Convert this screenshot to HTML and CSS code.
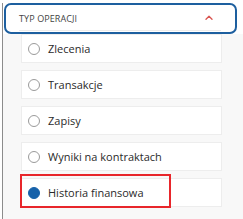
FILE: index.html
```html
<!DOCTYPE html>
<html>
<head>
    <meta name="viewport" content="width=device-width, initial-scale=1">
    <title>Typ operacji</title>
    <link rel="stylesheet" href="styles.css">
</head>
<body>
    <div class="panel">
        <div class="section-head">
            <div class="head-row">
                <span class="head-title">Typ operacji</span>
                <svg class="chevron" width="8" height="5" viewBox="0 0 8 5">
                    <path d="M1 4.2 L4 1.2 L7 4.2" fill="none" stroke="#d9534f" stroke-width="1.3" stroke-linecap="round" stroke-linejoin="round"/>
                </svg>
            </div>
        </div>

        <div class="options">
            <div class="option"><span class="radio"></span><span class="label">Zlecenia</span></div>
            <div class="option"><span class="radio"></span><span class="label">Transakcje</span></div>
            <div class="option"><span class="radio"></span><span class="label">Zapisy</span></div>
            <div class="option"><span class="radio"></span><span class="label">Wyniki na kontraktach</span></div>
            <div class="option selected">
                <span class="radio"></span><span class="label">Historia finansowa</span>
                <span class="highlight"></span>
            </div>
        </div>
    </div>
</body>
</html>
```

FILE: styles.css
```css
body {
    margin: 0;
    padding: 0;
    background: #fff;
    font-family: "Open Sans", Arial, sans-serif;
}

.panel {
    margin-left: 2px;
    border-left: 1px solid #8c8c8c;
    height: 219px;
    box-sizing: border-box;
}

.section-head {
    position: relative;
    z-index: 1;
    margin: 3px 6px 0 1px;
    border: 2px solid #1d5f9f;
    border-radius: 7px;
    background: #fff;
    padding: 0 14px 1px 13px;
}

.head-row {
    height: 25px;
    display: flex;
    align-items: center;
    justify-content: space-between;
    border-bottom: 1px solid #ececec;
}

.head-title {
    font-size: 9px;
    letter-spacing: 0.1px;
    text-transform: uppercase;
    color: #444;
    padding-top: 2px;
}

.chevron {
    margin-right: 8px;
}

.options {
    background: #f8f8f8;
    padding: 0 21px 0 18px;
    display: flex;
    flex-direction: column;
    gap: 7px;
    height: 185px;
}

.option {
    position: relative;
    height: 29px;
    box-sizing: border-box;
    background: #fff;
    border: 1px solid #ededed;
    display: flex;
    align-items: center;
    padding-left: 6px;
}

.radio {
    width: 12px;
    height: 12px;
    box-sizing: border-box;
    border: 1px solid #9a9a9a;
    border-radius: 50%;
    margin-right: 8px;
    flex-shrink: 0;
}

.option.selected .radio {
    background: #1762aa;
    border-color: #1762aa;
}

.label {
    font-size: 11px;
    color: #2a2a2a;
}

.highlight {
    position: absolute;
    left: -2px;
    top: -5px;
    width: 151px;
    height: 34px;
    box-sizing: border-box;
    border: 2px solid #e8262b;
}
```
